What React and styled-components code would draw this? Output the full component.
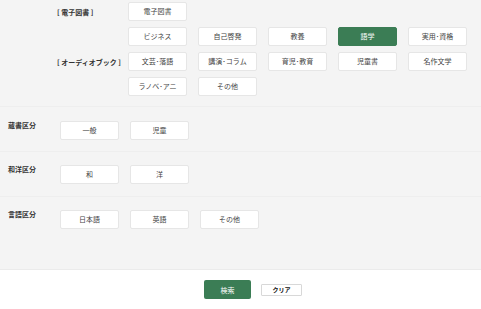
import React from 'react';
import styled, { createGlobalStyle } from 'styled-components';

const GlobalStyle = createGlobalStyle`
  body {
    margin: 0;
    background: #ffffff;
    font-family: "Noto Sans CJK JP", "Noto Sans", sans-serif;
    color: #333333;
  }
`;

const Page = styled.main`
  width: 481px;
  height: 309px;
  overflow: hidden;
`;

const Panel = styled.div`
  background: #f4f4f4;
  border-bottom: 1px solid #ebebeb;
`;

const Section = styled.section`
  display: flex;
  align-items: flex-start;
  padding: ${p => p.$pad};
  border-bottom: ${p => (p.$last ? 'none' : '1px solid #eeeeee')};
`;

const Groups = styled.div`
  display: flex;
  flex-direction: column;
  gap: 6px;
`;

const Group = styled.div`
  display: flex;
  align-items: center;
`;

const GroupLabel = styled.div`
  width: 71px;
  padding-left: 57px;
  font-size: 7px;
  font-weight: 700;
  color: #333;
  white-space: pre;
`;

const Label = styled.div`
  width: 52px;
  padding-left: 8px;
  padding-top: 1px;
  font-size: 7px;
  line-height: 7px;
  font-weight: 700;
  color: #333;
  white-space: nowrap;
`;

const Options = styled.div`
  display: grid;
  grid-template-columns: repeat(5, 59px);
  column-gap: 11px;
  row-gap: 6px;
`;

const Option = styled.button`
  height: 19px;
  padding: 0;
  border: 1px solid ${p => (p.$active ? '#3b7d55' : '#e6e6e6')};
  border-radius: 2px;
  background: ${p => (p.$active ? '#3b7d55' : '#ffffff')};
  color: ${p => (p.$active ? '#ffffff' : '#444444')};
  font-family: inherit;
  font-size: 7px;
  line-height: 1;
`;

const Footer = styled.footer`
  display: flex;
  justify-content: center;
  align-items: center;
  gap: 10px;
  padding: 10px 0 0 25px;
`;

const SearchButton = styled.button`
  width: 47px;
  height: 19px;
  border: none;
  border-radius: 2px;
  background: #3b7d55;
  color: #ffffff;
  font-family: inherit;
  font-size: 7px;
`;

const ClearButton = styled.button`
  width: 41px;
  height: 12px;
  padding: 0;
  border: 1px solid #d8d8d8;
  border-radius: 1px;
  background: #ffffff;
  color: #111111;
  font-family: inherit;
  font-size: 6px;
  font-weight: 700;
`;

const ebook = ['電子図書'];
const audio = [
  'ビジネス', '自己啓発', '教養', '語学', '実用･資格',
  '文芸･落語', '講演･コラム', '育児･教育', '児童書', '名作文学',
  'ラノベ･アニ', 'その他',
];

const filters = [
  { label: '蔵書区分', items: ['一般', '児童'], pad: '14px 0 11px' },
  { label: '和洋区分', items: ['和', '洋'], pad: '13px 0 12px' },
  { label: '言語区分', items: ['日本語', '英語', 'その他'], pad: '13px 0 40px' },
];

const App = () => {
  return (
    <Page>
      <GlobalStyle />
      <Panel>
        <Section $pad="2px 0 10px">
          <Groups>
            <Group>
              <GroupLabel>[ 電子図書 ]</GroupLabel>
              <Options>
                {ebook.map(t => <Option key={t}>{t}</Option>)}
              </Options>
            </Group>
            <Group>
              <GroupLabel>[ オーディオブック ]</GroupLabel>
              <Options>
                {audio.map(t => (
                  <Option key={t} $active={t === '語学'}>{t}</Option>
                ))}
              </Options>
            </Group>
          </Groups>
        </Section>
        {filters.map((f, i) => (
          <Section key={f.label} $pad={f.pad} $last={i === filters.length - 1}>
            <Label>{f.label}</Label>
            <Options>
              {f.items.map(t => <Option key={t}>{t}</Option>)}
            </Options>
          </Section>
        ))}
      </Panel>
      <Footer>
        <SearchButton>検索</SearchButton>
        <ClearButton>クリア</ClearButton>
      </Footer>
    </Page>
  );
};

export default App;
